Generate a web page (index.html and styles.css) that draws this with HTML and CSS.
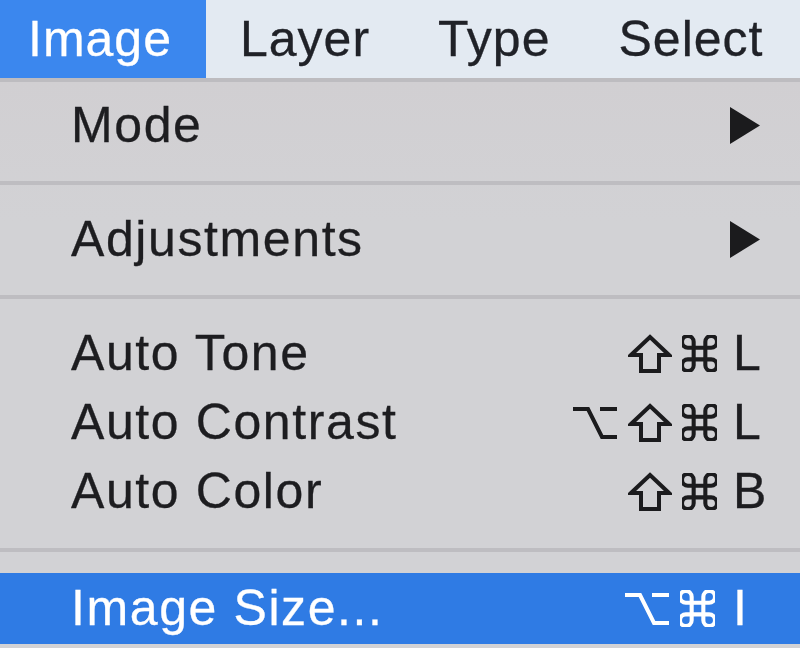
FILE: index.html
```html
<!DOCTYPE html>
<html lang="en">
<head>
<meta charset="utf-8">
<title>Image menu</title>
<link rel="stylesheet" href="styles.css">
</head>
<body>
<div class="screen">
  <nav class="menubar">
    <div class="bar-item bar-item--active bar-item--first">Image</div>
    <div class="bar-item">Layer</div>
    <div class="bar-item">Type</div>
    <div class="bar-item">Select</div>
  </nav>
  <div class="menu">
    <div class="item">
      <span class="label">Mode</span>
      <svg class="arrow" width="30" height="37" viewBox="0 0 30 37"><polygon points="0,0 30,18.5 0,37" /></svg>
    </div>
    <div class="sep"></div>
    <div class="item">
      <span class="label">Adjustments</span>
      <svg class="arrow" width="30" height="37" viewBox="0 0 30 37"><polygon points="0,0 30,18.5 0,37" /></svg>
    </div>
    <div class="sep"></div>
    <div class="item">
      <span class="label">Auto Tone</span>
      <span class="shortcut">
        <span class="mods">
          <svg class="mod mod-shift" width="44" height="40" viewBox="0 0 44 40"><polygon points="22,3 41,21 31,21 31,37 13,37 13,21 3,21" /></svg>
          <svg class="mod mod-cmd" width="35" height="37" viewBox="3 3 18 18"><path d="M15 6v12a3 3 0 1 0 3-3H6a3 3 0 1 0 3 3V6a3 3 0 1 0-3 3h12a3 3 0 1 0-3-3" /></svg>
        </span>
        <span class="key">L</span>
      </span>
    </div>
    <div class="item">
      <span class="label">Auto Contrast</span>
      <span class="shortcut">
        <span class="mods">
          <svg class="mod mod-opt" width="46" height="36" viewBox="0 0 46 36"><path d="M1 4H16L30 32H45M28 4H45" /></svg>
          <svg class="mod mod-shift" width="44" height="40" viewBox="0 0 44 40"><polygon points="22,3 41,21 31,21 31,37 13,37 13,21 3,21" /></svg>
          <svg class="mod mod-cmd" width="35" height="37" viewBox="3 3 18 18"><path d="M15 6v12a3 3 0 1 0 3-3H6a3 3 0 1 0 3 3V6a3 3 0 1 0-3 3h12a3 3 0 1 0-3-3" /></svg>
        </span>
        <span class="key">L</span>
      </span>
    </div>
    <div class="item">
      <span class="label">Auto Color</span>
      <span class="shortcut">
        <span class="mods">
          <svg class="mod mod-shift" width="44" height="40" viewBox="0 0 44 40"><polygon points="22,3 41,21 31,21 31,37 13,37 13,21 3,21" /></svg>
          <svg class="mod mod-cmd" width="35" height="37" viewBox="3 3 18 18"><path d="M15 6v12a3 3 0 1 0 3-3H6a3 3 0 1 0 3 3V6a3 3 0 1 0-3 3h12a3 3 0 1 0-3-3" /></svg>
        </span>
        <span class="key">B</span>
      </span>
    </div>
    <div class="sep sep--last"></div>
    <div class="item item--selected">
      <span class="label">Image Size...</span>
      <span class="shortcut">
        <span class="mods">
          <svg class="mod mod-opt" width="46" height="36" viewBox="0 0 46 36"><path d="M1 4H16L30 32H45M28 4H45" /></svg>
          <svg class="mod mod-cmd" width="35" height="37" viewBox="3 3 18 18"><path d="M15 6v12a3 3 0 1 0 3-3H6a3 3 0 1 0 3 3V6a3 3 0 1 0-3 3h12a3 3 0 1 0-3-3" /></svg>
        </span>
        <span class="key key--narrow">I</span>
      </span>
    </div>
  </div>
</div>
</body>
</html>
```
FILE: styles.css
```css
html, body {
  margin: 0;
  padding: 0;
}
body {
  background: #d2d2d5;
  font-family: "Liberation Sans", Arial, sans-serif;
  color: #1d1d20;
}
.screen {
  width: 800px;
  height: 648px;
  overflow: hidden;
  background: #d2d2d5;
}
.menubar {
  display: flex;
  height: 78px;
  background: #e3eaf2;
  border-bottom: 4px solid #bdbcc0;
}
.bar-item {
  font-size: 50px;
  line-height: 78px;
  letter-spacing: 1px;
  padding: 0 34px;
  color: #202228;
  -webkit-text-stroke: 0.3px #202228;
}
.bar-item--first {
  padding-left: 28px;
  width: 144px;
  padding-right: 34px;
}
.bar-item--active {
  background: #3b87ee;
  color: #ffffff;
  -webkit-text-stroke: 0.3px #ffffff;
}
.menu {
  padding-top: 9px;
  background: linear-gradient(#d1cfd2, #d2d2d5 140px);
}
.item {
  display: flex;
  align-items: center;
  justify-content: space-between;
  height: 69px;
  padding: 0 35px 0 71px;
  font-size: 50px;
  letter-spacing: 1.6px;
  -webkit-text-stroke: 0.3px #1d1d20;
}
.label {
  line-height: 69px;
  white-space: nowrap;
}
.arrow {
  display: block;
  margin-right: 5px;
  fill: #1b1b1d;
}
.sep {
  height: 45px;
  display: flex;
  align-items: center;
}
.sep::before {
  content: "";
  display: block;
  width: 100%;
  height: 4px;
  background: #bebdc1;
}
.sep--last {
  height: 47px;
}
.item--selected {
  height: 71px;
  background: #2f7be4;
  color: #ffffff;
  -webkit-text-stroke: 0.3px #ffffff;
}
.shortcut {
  display: flex;
  align-items: center;
}
.mods {
  display: flex;
  align-items: center;
  gap: 10px;
}
.mod {
  display: block;
  fill: none;
  stroke: #1b1b1d;
  stroke-width: 4;
  stroke-linejoin: miter;
}
.mod-cmd {
  stroke-width: 2.1;
}
.item--selected .mod {
  stroke: #ffffff;
}
.key {
  width: 32px;
  margin-left: 16px;
  letter-spacing: 0;
  line-height: 69px;
}
.key--narrow {
  margin-left: 18px;
}
```
